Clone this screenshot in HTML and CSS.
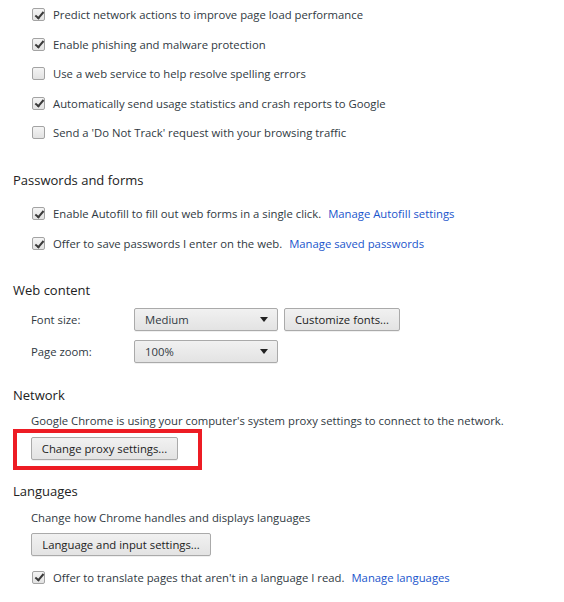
FILE: index.html
```html
<!DOCTYPE html>
<html>
<head>
<meta charset="utf-8">
<link rel="stylesheet" href="styles.css">
</head>
<body>
<div class="page">
  <section class="sec sec-first">
    <div class="rows">
      <label class="cb-row"><span class="cb checked"></span><span>Predict network actions to improve page load performance</span></label>
      <label class="cb-row"><span class="cb checked"></span><span>Enable phishing and malware protection</span></label>
      <label class="cb-row"><span class="cb"></span><span>Use a web service to help resolve spelling errors</span></label>
      <label class="cb-row"><span class="cb checked"></span><span>Automatically send usage statistics and crash reports to Google</span></label>
      <label class="cb-row"><span class="cb"></span><span>Send a 'Do Not Track' request with your browsing traffic</span></label>
    </div>
  </section>

  <section class="sec">
    <h3 class="heading">Passwords and forms</h3>
    <div class="rows rows-pw">
      <label class="cb-row"><span class="cb checked"></span><span>Enable Autofill to fill out web forms in a single click.</span><a class="link">Manage Autofill settings</a></label>
      <label class="cb-row"><span class="cb checked"></span><span>Offer to save passwords I enter on the web.</span><a class="link">Manage saved passwords</a></label>
    </div>
  </section>

  <section class="sec sec-web">
    <h3 class="heading">Web content</h3>
    <div class="form-rows">
      <div class="form-row">
        <span class="form-label">Font size:</span>
        <div class="select"><span>Medium</span><span class="arrow"></span></div>
        <div class="btn btn-fonts">Customize fonts...</div>
      </div>
      <div class="form-row">
        <span class="form-label">Page zoom:</span>
        <div class="select"><span>100%</span><span class="arrow"></span></div>
      </div>
    </div>
  </section>

  <section class="sec">
    <h3 class="heading">Network</h3>
    <div class="indent">
      <p class="desc desc-net">Google Chrome is using your computer's system proxy settings to connect to the network.</p>
      <div class="annotated">
        <div class="btn">Change proxy settings...</div>
        <span class="red-box"></span>
      </div>
    </div>
  </section>

  <section class="sec sec-lang">
    <h3 class="heading">Languages</h3>
    <div class="indent">
      <p class="desc">Change how Chrome handles and displays languages</p>
      <div class="btn btn-lang">Language and input settings...</div>
    </div>
    <div class="rows rows-lang">
      <label class="cb-row"><span class="cb checked"></span><span>Offer to translate pages that aren't in a language I read.</span><a class="link">Manage languages</a></label>
    </div>
  </section>
</div>
</body>
</html>
```

FILE: styles.css
```css
* { box-sizing: border-box; }

body {
  margin: 0;
  background: #fff;
  font-family: "Open Sans", "Noto Sans", sans-serif;
  font-size: 11.3px;
  color: #303942;
}

.page {
  padding-left: 13px;
  width: 564px;
  height: 602px;
  overflow: hidden;
}

.sec { margin-top: 22px; }
.sec-first { margin-top: 0; }
.sec-web { margin-top: 21px; }
.sec-lang { margin-top: 21px; }

.heading {
  margin: 0;
  height: 20px;
  line-height: 20px;
  font-size: 13px;
  font-weight: normal;
  color: #222;
}

.rows { display: flex; flex-direction: column; }
.heading + .rows { margin-top: 8px; }
.heading + .rows-pw { margin-top: 9px; }

.cb-row {
  display: flex;
  align-items: center;
  height: 29.5px;
  padding-left: 19px;
  white-space: nowrap;
}

.rows-pw .cb-row { height: 30px; }

.cb {
  flex: none;
  width: 13px;
  height: 13px;
  margin-right: 8px;
  border: 1px solid #a3a3a3;
  border-radius: 2px;
  background: linear-gradient(#f4f4f4, #e2e2e2);
  position: relative;
}

.cb.checked::after {
  content: "";
  position: absolute;
  left: 3.5px;
  top: 0.5px;
  width: 3px;
  height: 7px;
  border: solid #3a3a3a;
  border-width: 0 2px 2px 0;
  transform: rotate(40deg);
}

.link {
  color: #1a55cc;
  margin-left: 7px;
  cursor: pointer;
}

.form-rows {
  margin-top: 8px;
  padding-left: 18px;
  display: flex;
  flex-direction: column;
  gap: 9px;
}

.form-row {
  display: flex;
  align-items: center;
  height: 23px;
}

.form-label { width: 103px; }

.select, .btn {
  height: 23px;
  border: 1px solid #aaa;
  border-radius: 2px;
  background: linear-gradient(#f1f1f1, #e3e3e3);
  box-shadow: 0 1px 0 rgba(0,0,0,0.06);
  display: flex;
  align-items: center;
  white-space: nowrap;
}

.select {
  width: 144px;
  padding: 0 9px 0 10px;
  justify-content: space-between;
}

.arrow {
  width: 0;
  height: 0;
  border-left: 4px solid transparent;
  border-right: 4px solid transparent;
  border-top: 5px solid #222;
}

.btn {
  display: inline-flex;
  justify-content: center;
  padding: 0 10px;
  color: #222;
}

.btn-fonts { width: 116px; margin-left: 6px; }

.indent { padding-left: 18px; }

.desc {
  margin: 9px 0 0;
  line-height: 16px;
  height: 16px;
  white-space: nowrap;
}

.desc-net { margin-top: 8px; }

.annotated {
  position: relative;
  margin-top: 8px;
  width: 147px;
}

.annotated .btn { width: 147px; }

.red-box {
  position: absolute;
  left: -18px;
  top: -8px;
  width: 189px;
  height: 41px;
  border: 4px solid #ed1c24;
}

.btn-lang { width: 180px; margin-top: 7px; }

.rows-lang { margin-top: 7px; }
```
